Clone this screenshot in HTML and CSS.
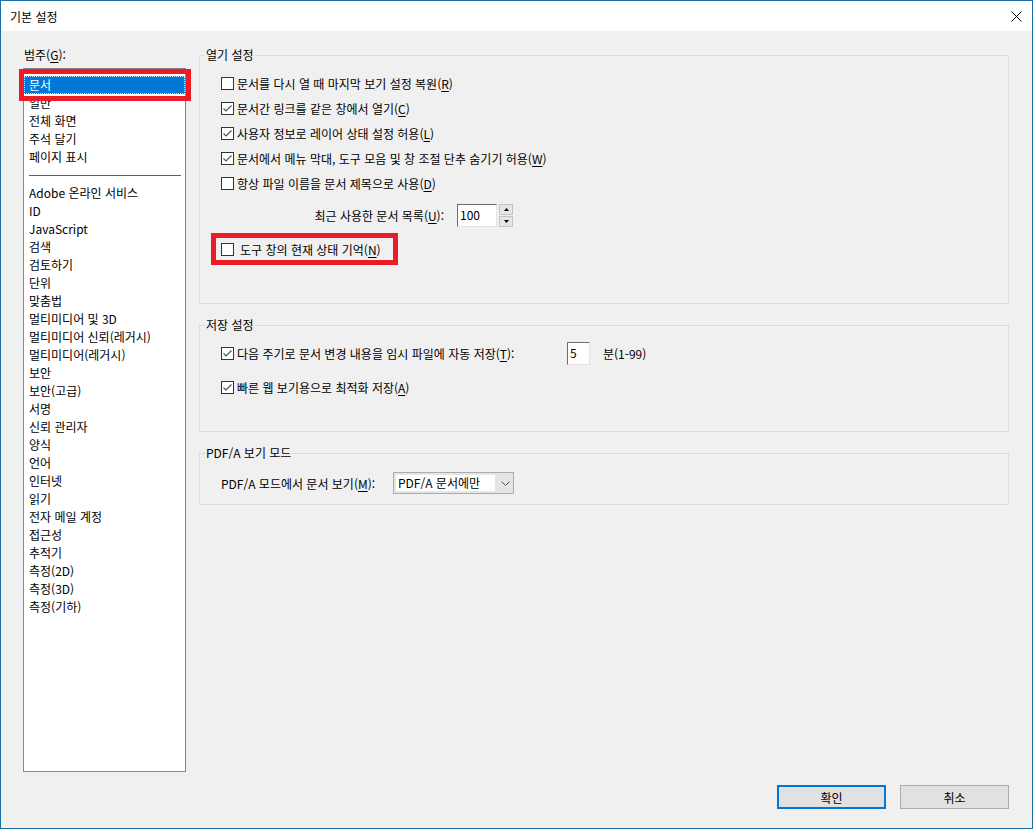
FILE: index.html
```html
<!DOCTYPE html>
<html lang="ko">
<head>
    <meta charset="UTF-8">
    <title>기본 설정</title>
    <link rel="stylesheet" href="styles.css">
</head>
<body>
    <div class="window">
        <div class="titlebar">
            <span class="title">기본 설정</span>
            <span class="close">
                <svg width="11" height="11" viewBox="0 0 11 11"><path d="M0.5 0.5L10.5 10.5M10.5 0.5L0.5 10.5" stroke="#000" stroke-width="1" fill="none"/></svg>
            </span>
        </div>

        <div class="main">
            <div class="sidebar">
                <div class="label">범주(<u>G</u>):</div>
                <ul class="list">
                    <li class="selected">문서</li>
                    <li>일반</li>
                    <li>전체 화면</li>
                    <li>주석 달기</li>
                    <li>페이지 표시</li>
                    <li class="sep"></li>
                    <li>Adobe 온라인 서비스</li>
                    <li>ID</li>
                    <li>JavaScript</li>
                    <li>검색</li>
                    <li>검토하기</li>
                    <li>단위</li>
                    <li>맞춤법</li>
                    <li>멀티미디어 및 3D</li>
                    <li>멀티미디어 신뢰(레거시)</li>
                    <li>멀티미디어(레거시)</li>
                    <li>보안</li>
                    <li>보안(고급)</li>
                    <li>서명</li>
                    <li>신뢰 관리자</li>
                    <li>양식</li>
                    <li>언어</li>
                    <li>인터넷</li>
                    <li>읽기</li>
                    <li>전자 메일 계정</li>
                    <li>접근성</li>
                    <li>추적기</li>
                    <li>측정(2D)</li>
                    <li>측정(3D)</li>
                    <li>측정(기하)</li>
                </ul>
                <!-- red annotation over the selected item -->
                <div class="mark mark-list"></div>
            </div>

            <div class="panel">
                <fieldset class="group group-open">
                    <legend>열기 설정</legend>
                    <div class="group-body">
                        <label class="check"><span class="box"></span><span>문서를 다시 열 때 마지막 보기 설정 복원(<u>R</u>)</span></label>
                        <label class="check"><span class="box"><svg width="11" height="11" viewBox="0 0 11 11"><path d="M1.5 5.5L4 8L9.5 2.5" stroke="#555" stroke-width="1.2" fill="none"/></svg></span><span>문서간 링크를 같은 창에서 열기(<u>C</u>)</span></label>
                        <label class="check"><span class="box"><svg width="11" height="11" viewBox="0 0 11 11"><path d="M1.5 5.5L4 8L9.5 2.5" stroke="#555" stroke-width="1.2" fill="none"/></svg></span><span>사용자 정보로 레이어 상태 설정 허용(<u>L</u>)</span></label>
                        <label class="check"><span class="box"><svg width="11" height="11" viewBox="0 0 11 11"><path d="M1.5 5.5L4 8L9.5 2.5" stroke="#555" stroke-width="1.2" fill="none"/></svg></span><span>문서에서 메뉴 막대, 도구 모음 및 창 조절 단추 숨기기 허용(<u>W</u>)</span></label>
                        <label class="check"><span class="box"></span><span>항상 파일 이름을 문서 제목으로 사용(<u>D</u>)</span></label>

                        <div class="recent">
                            <span class="recent-label">최근 사용한 문서 목록(<u>U</u>):</span>
                            <span class="field field-recent">100</span>
                            <span class="spin">
                                <span class="spin-btn"><svg width="5" height="3" viewBox="0 0 5 3"><path d="M2.5 0L5 3H0z" fill="#000"/></svg></span>
                                <span class="spin-btn"><svg width="5" height="3" viewBox="0 0 5 3"><path d="M0 0H5L2.5 3z" fill="#000"/></svg></span>
                            </span>
                        </div>

                        <label class="check check-marked"><span class="box"></span><span>도구 창의 현재 상태 기억(<u>N</u>)</span></label>
                    </div>
                </fieldset>

                <fieldset class="group group-save">
                    <legend>저장 설정</legend>
                    <div class="group-body">
                        <div class="autosave">
                            <label class="check check-wide"><span class="box"><svg width="11" height="11" viewBox="0 0 11 11"><path d="M1.5 5.5L4 8L9.5 2.5" stroke="#555" stroke-width="1.2" fill="none"/></svg></span><span>다음 주기로 문서 변경 내용을 임시 파일에 자동 저장(<u>T</u>):</span></label>
                            <span class="field field-min">5</span>
                            <span class="unit">분(1-99)</span>
                        </div>
                        <label class="check check-tight"><span class="box"><svg width="11" height="11" viewBox="0 0 11 11"><path d="M1.5 5.5L4 8L9.5 2.5" stroke="#555" stroke-width="1.2" fill="none"/></svg></span><span>빠른 웹 보기용으로 최적화 저장(<u>A</u>)</span></label>
                    </div>
                </fieldset>

                <fieldset class="group group-pdfa">
                    <legend>PDF/A 보기 모드</legend>
                    <div class="group-body">
                        <div class="pdfa">
                            <span class="pdfa-label">PDF/A 모드에서 문서 보기(<u>M</u>):</span>
                            <span class="combo">
                                <span class="combo-value">PDF/A 문서에만</span>
                                <svg class="combo-arrow" width="9" height="5" viewBox="0 0 9 5"><path d="M0.5 0.5L4.5 4.5L8.5 0.5" stroke="#555" stroke-width="1" fill="none"/></svg>
                            </span>
                        </div>
                    </div>
                </fieldset>
            </div>
        </div>

        <div class="footer">
            <button class="btn btn-default">확인</button>
            <button class="btn">취소</button>
        </div>
    </div>
</body>
</html>
```

FILE: styles.css
```css
body {
    margin: 0;
    background: #ffffff;
    font-family: "Noto Sans CJK KR", "Noto Sans", sans-serif;
    font-size: 12px;
    color: #000;
}
u {
    text-decoration-thickness: 1px;
    text-underline-offset: 2px;
}
.window {
    width: 1033px;
    height: 829px;
    box-sizing: border-box;
    border: 1px solid #1a6fa8;
    background: #f0f0f0;
    display: flex;
    flex-direction: column;
    overflow: hidden;
}
.titlebar {
    height: 30px;
    flex: none;
    background: #fff;
    display: flex;
    align-items: center;
    justify-content: space-between;
    padding: 0 10px 0 9px;
}
.close {
    display: flex;
}

.main {
    flex: 1;
    min-height: 0;
    display: flex;
    gap: 13px;
    padding: 15px 23px 0 22px;
}
.sidebar {
    width: 163px;
    flex: none;
    display: flex;
    flex-direction: column;
    position: relative;
}
.label {
    line-height: 18px;
    margin-bottom: 4px;
    padding-left: 1px;
}
.list {
    flex: 1;
    margin: 0;
    padding: 7px 0 0;
    list-style: none;
    background: #fff;
    border: 1px solid #828790;
}
.list li {
    height: 18px;
    line-height: 18px;
    padding-left: 5px;
    white-space: nowrap;
}
.list li.selected {
    background: #0078d7;
    color: #fff;
    outline: 1px dotted #cfe6fa;
    outline-offset: -1px;
}
.list li.sep {
    display: flex;
    align-items: center;
    padding: 0 4px 0 5px;
}
.list li.sep::after {
    content: "";
    flex: 1;
    height: 1px;
    background: #0078d7;
}
.mark {
    box-sizing: border-box;
    border: 5px solid #ec1c24;
}
.mark-list {
    position: absolute;
    left: -4px;
    top: 23px;
    width: 172px;
    height: 32px;
}

.panel {
    flex: 1;
    display: flex;
    flex-direction: column;
}
.group {
    margin: 0;
    padding: 0;
    min-width: 0;
    border: 1px solid #dcdcdc;
}
.group legend {
    margin-left: 5px;
    padding: 0 1px;
    line-height: 18px;
}
.group-body {
    padding: 0 21px;
    display: flex;
    flex-direction: column;
    align-items: flex-start;
}
.group-open .group-body {
    padding-top: 7px;
    padding-bottom: 38px;
}
.group-save {
    margin-top: 12px;
}
.group-save .group-body {
    padding-top: 8px;
    padding-bottom: 32px;
}
.group-pdfa {
    margin-top: 12px;
}
.group-pdfa .group-body {
    padding-top: 10px;
    padding-bottom: 10px;
}

.check {
    display: flex;
    align-items: center;
    gap: 3px;
    height: 25px;
    white-space: nowrap;
}
.box {
    width: 13px;
    height: 13px;
    box-sizing: border-box;
    border: 1px solid #333;
    background: #fff;
    display: flex;
    align-items: center;
    justify-content: center;
    flex: none;
}
.check-marked {
    box-sizing: border-box;
    height: 32px;
    width: 187px;
    margin: 6px 0 0 -10px;
    padding-left: 5px;
    gap: 6px;
    border: 5px solid #ec1c24;
}
.check-wide {
    width: 346px;
    height: 23px;
}
.check-tight {
    height: 23px;
    margin-top: 11px;
}

.recent {
    display: flex;
    align-items: center;
    margin-top: 8px;
    height: 23px;
}
.recent-label {
    width: 223px;
    text-align: right;
    margin-right: 13px;
}
.field {
    box-sizing: border-box;
    height: 23px;
    background: #fff;
    border: 1px solid #e3e3e3;
    border-top-color: #6d6d6d;
    border-left-color: #6d6d6d;
    padding-left: 2px;
    line-height: 20px;
}
.field-recent {
    width: 40px;
}
.field-min {
    width: 23px;
}
.spin {
    margin-left: 2px;
    display: flex;
    flex-direction: column;
    gap: 1px;
    width: 14px;
    height: 23px;
}
.spin-btn {
    flex: 1;
    box-sizing: border-box;
    background: #e6e6e6;
    border: 1px solid #c4c4c4;
    display: flex;
    align-items: center;
    justify-content: center;
}

.autosave {
    display: flex;
    align-items: center;
    height: 23px;
}
.unit {
    margin-left: 13px;
}

.pdfa {
    display: flex;
    align-items: center;
    height: 22px;
}
.pdfa-label {
    width: 172px;
}
.combo {
    box-sizing: border-box;
    width: 121px;
    height: 22px;
    background: #e5e5e5;
    border: 1px solid #acacac;
    display: flex;
    align-items: center;
    padding: 2px;
}
.combo-value {
    background: #fff;
    width: 99px;
    height: 16px;
    line-height: 16px;
    padding-left: 2px;
    box-sizing: border-box;
}
.combo-arrow {
    margin-left: 6px;
}

.footer {
    flex: none;
    display: flex;
    justify-content: flex-end;
    gap: 14px;
    padding: 13px 23px 19px;
}
.btn {
    box-sizing: border-box;
    width: 109px;
    height: 24px;
    background: #e1e1e1;
    border: 1px solid #adadad;
    font-family: inherit;
    font-size: 12px;
    color: #000;
    padding: 0;
}
.btn-default {
    border: 2px solid #0078d7;
}
```
